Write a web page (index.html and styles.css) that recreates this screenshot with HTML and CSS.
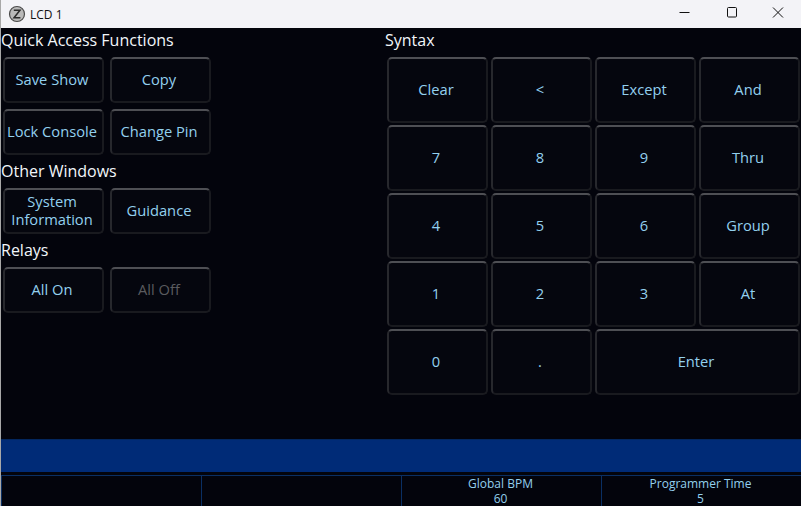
FILE: index.html
```html
<!DOCTYPE html>
<html>
  <head>
    <meta charset="utf-8">
    <title>LCD 1</title>
    <link rel="stylesheet" href="styles.css">
  </head>

  <body>
    <div class="window">
      <div class="titlebar">
        <div class="app-title">
          <svg class="app-icon" width="18" height="18" viewBox="0 0 18 18">
            <circle cx="9" cy="9" r="7.5" fill="#b9b9b9" stroke="#4a4a4a" stroke-width="1.2"/>
            <path d="M5.8 5.3H12L6 12.7H12.4" fill="none" stroke="#2b2b2b" stroke-width="1.5"/>
          </svg>
          <span>LCD 1</span>
        </div>
        <div class="win-controls">
          <svg class="win-btn" width="46" height="28" viewBox="0 0 46 28"><path d="M16.5 12.5H26.5" stroke="#111" fill="none"/></svg>
          <svg class="win-btn" width="46" height="28" viewBox="0 0 46 28"><rect x="18.5" y="7.5" width="9" height="9.5" rx="1" stroke="#111" fill="none"/></svg>
          <svg class="win-btn" width="46" height="28" viewBox="0 0 46 28"><path d="M18 7.5L28 17.5M28 7.5L18 17.5" stroke="#111" fill="none"/></svg>
        </div>
      </div>

      <div class="main">
        <div class="left">
          <div class="heading">Quick Access Functions</div>
          <div class="btn-row">
            <div class="btn small">Save Show</div>
            <div class="btn small">Copy</div>
          </div>
          <div class="btn-row">
            <div class="btn small">Lock Console</div>
            <div class="btn small">Change Pin</div>
          </div>
          <div class="heading">Other Windows</div>
          <div class="btn-row">
            <div class="btn small">System<br>Information</div>
            <div class="btn small">Guidance</div>
          </div>
          <div class="heading">Relays</div>
          <div class="btn-row">
            <div class="btn small">All On</div>
            <div class="btn small disabled">All Off</div>
          </div>
        </div>

        <div class="right">
          <div class="heading">Syntax</div>
          <div class="keypad">
            <div class="btn">Clear</div>
            <div class="btn">&lt;</div>
            <div class="btn">Except</div>
            <div class="btn">And</div>
            <div class="btn">7</div>
            <div class="btn">8</div>
            <div class="btn">9</div>
            <div class="btn">Thru</div>
            <div class="btn">4</div>
            <div class="btn">5</div>
            <div class="btn">6</div>
            <div class="btn">Group</div>
            <div class="btn">1</div>
            <div class="btn">2</div>
            <div class="btn">3</div>
            <div class="btn">At</div>
            <div class="btn">0</div>
            <div class="btn">.</div>
            <div class="btn wide">Enter</div>
          </div>
        </div>
      </div>

      <div class="command-bar"></div>

      <div class="status">
        <div class="cell"></div>
        <div class="cell"></div>
        <div class="cell">Global BPM<br>60</div>
        <div class="cell">Programmer Time<br>5</div>
      </div>
    </div>
  </body>
</html>
```

FILE: styles.css
```css
html, body {
  margin: 0;
  padding: 0;
}

body {
  width: 801px;
  height: 506px;
  overflow: hidden;
  font-family: "Open Sans", "Noto Sans", sans-serif;
  background-color: #03040c;
}

.window {
  display: flex;
  flex-direction: column;
  height: 506px;
  border-left: 1px solid #a8a8a8;
  box-sizing: border-box;
}

.titlebar {
  display: flex;
  justify-content: space-between;
  flex: none;
  height: 28px;
  background-color: #f3f3f7;
  color: #111111;
  font-size: 12px;
}

.app-title {
  display: flex;
  align-items: center;
  gap: 4px;
  padding-left: 7px;
}

.win-controls {
  display: flex;
}

.win-btn {
  display: block;
}

.main {
  display: flex;
  flex: none;
  height: 411px;
}

.left {
  width: 384px;
  padding-top: 2px;
  box-sizing: border-box;
}

.right {
  flex: 1;
  padding-top: 2px;
}

.heading {
  height: 20px;
  line-height: 20px;
  margin-bottom: 7px;
  font-size: 16px;
  color: #f2f6fa;
}

.btn-row {
  display: flex;
  gap: 6px;
  padding-left: 2px;
  margin-bottom: 6px;
}

.btn {
  display: flex;
  align-items: center;
  justify-content: center;
  box-sizing: border-box;
  padding-right: 3px;
  padding-bottom: 2px;
  border: 2px solid #191a1f;
  border-top-color: #4e4f54;
  border-left-color: #27282d;
  border-radius: 5px;
  background-color: #05060e;
  color: #93d0ee;
  font-size: 14.7px;
  line-height: 18px;
  text-align: center;
}

.btn.small {
  width: 101px;
  height: 46px;
}

.btn.disabled {
  color: #5a5b5f;
}

.keypad {
  display: grid;
  grid-template-columns: repeat(4, 101px);
  grid-auto-rows: 66px;
  gap: 2px 3px;
  padding-left: 2px;
}

.btn.wide {
  grid-column: span 2;
}

.command-bar {
  flex: none;
  height: 33px;
  background-color: #002b77;
  border-top: 1px solid #03275f;
  box-sizing: border-box;
}

.status {
  display: grid;
  grid-template-columns: repeat(4, 200px);
  flex: none;
  height: 31px;
  margin-top: 3px;
  border-top: 1px solid #0a2f63;
}

.cell {
  padding-right: 2px;
  border-left: 1px solid #0a2f63;
  color: #93d0ee;
  font-size: 12px;
  line-height: 15px;
  text-align: center;
}
```
